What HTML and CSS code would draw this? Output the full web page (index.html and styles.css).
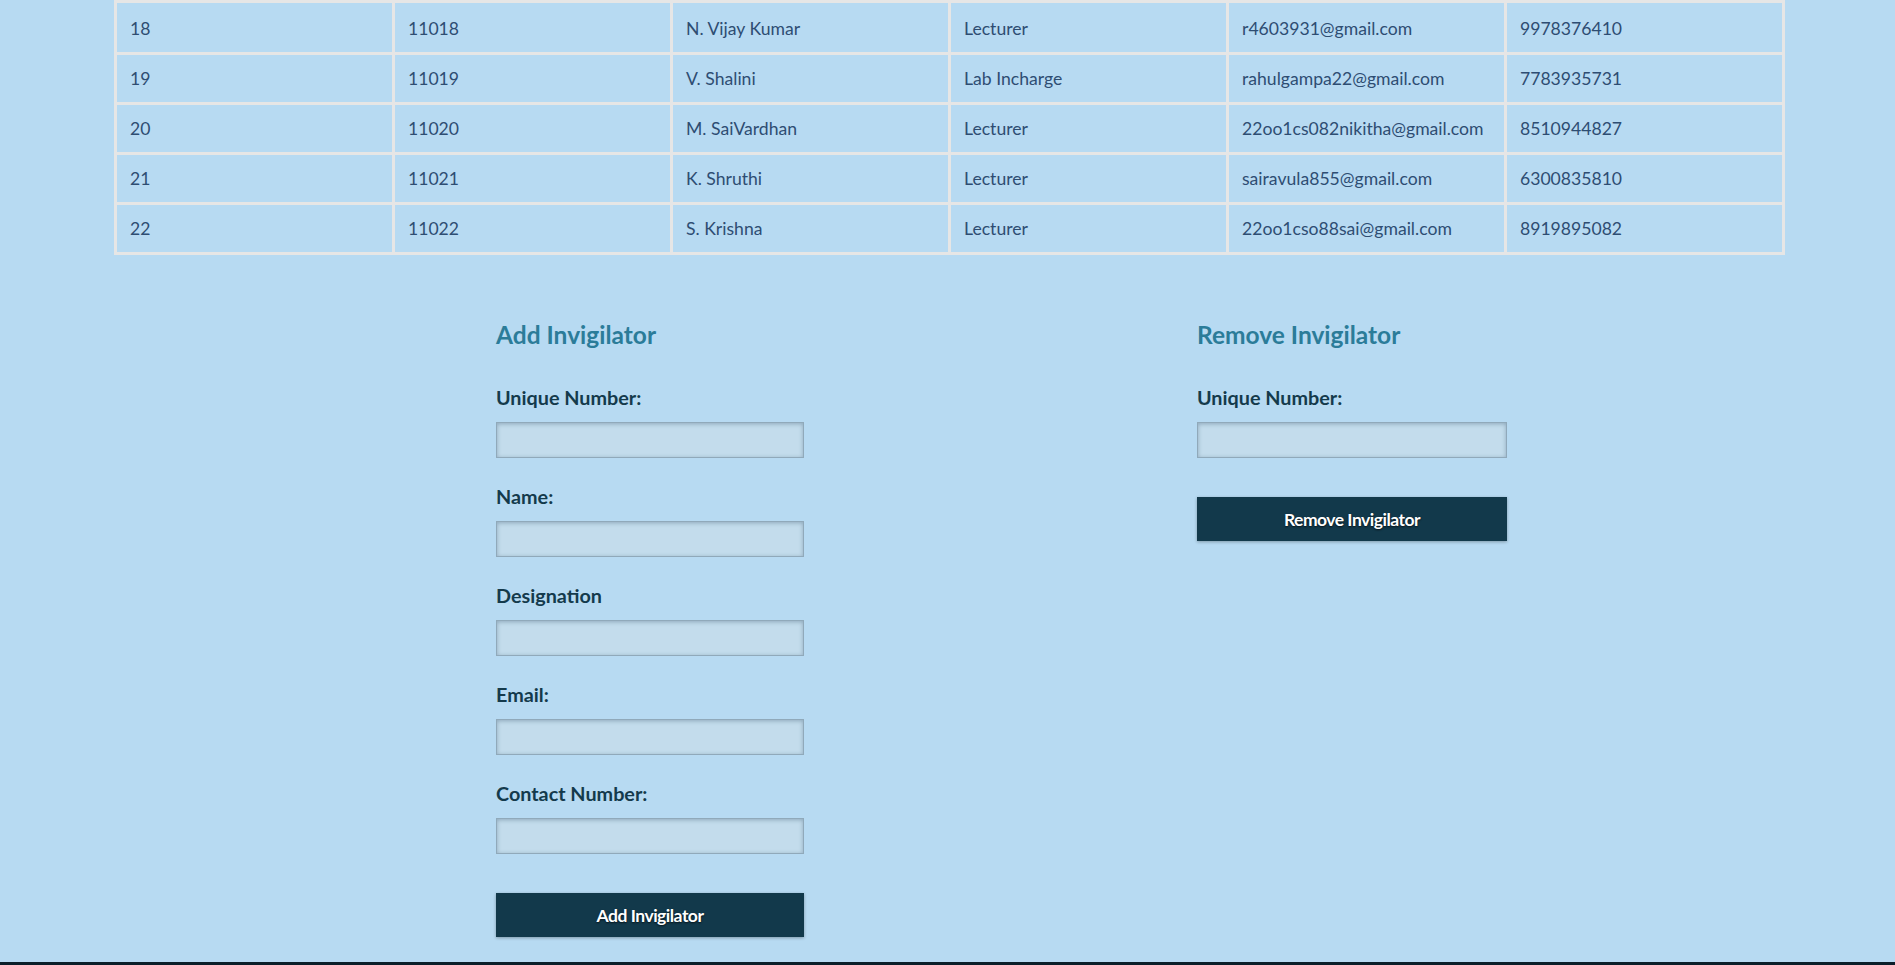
FILE: index.html
```html
<!DOCTYPE html>
<html>
<head>
<meta charset="utf-8">
<link rel="stylesheet" href="styles.css">
</head>
<body>
<main class="page">
  <table class="staff-table">
    <tbody>
      <tr><td>18</td><td>11018</td><td>N. Vijay Kumar</td><td>Lecturer</td><td>r4603931@gmail.com</td><td>9978376410</td></tr>
      <tr><td>19</td><td>11019</td><td>V. Shalini</td><td>Lab Incharge</td><td>rahulgampa22@gmail.com</td><td>7783935731</td></tr>
      <tr><td>20</td><td>11020</td><td>M. SaiVardhan</td><td>Lecturer</td><td>22oo1cs082nikitha@gmail.com</td><td>8510944827</td></tr>
      <tr><td>21</td><td>11021</td><td>K. Shruthi</td><td>Lecturer</td><td>sairavula855@gmail.com</td><td>6300835810</td></tr>
      <tr><td>22</td><td>11022</td><td>S. Krishna</td><td>Lecturer</td><td>22oo1cso88sai@gmail.com</td><td>8919895082</td></tr>
    </tbody>
  </table>

  <section class="forms">
    <form class="form-box form-add">
      <h2 class="form-title">Add Invigilator</h2>
      <label class="field-label">Unique Number:</label>
      <input class="field-input" type="text">
      <label class="field-label">Name:</label>
      <input class="field-input" type="text">
      <label class="field-label">Designation</label>
      <input class="field-input" type="text">
      <label class="field-label">Email:</label>
      <input class="field-input" type="text">
      <label class="field-label">Contact Number:</label>
      <input class="field-input" type="text">
      <button class="form-btn" type="button">Add Invigilator</button>
    </form>
    <form class="form-box form-remove">
      <h2 class="form-title">Remove Invigilator</h2>
      <label class="field-label">Unique Number:</label>
      <input class="field-input" type="text">
      <button class="form-btn" type="button">Remove Invigilator</button>
    </form>
  </section>
</main>
<footer class="footer"></footer>
</body>
</html>
```
FILE: styles.css
```css
* { box-sizing: border-box; }
html, body {
  margin: 0;
  padding: 0;
  background: #b7daf2;
  font-family: "Lato", "Noto Sans", "Liberation Sans", sans-serif;
}
.page {
  padding-bottom: 25px;
}
.staff-table {
  width: 1671px;
  margin-left: 114px;
  border-collapse: collapse;
  table-layout: fixed;
}
.staff-table td {
  border: 3px solid #e6e6e6;
  padding: 14px 13px;
  line-height: 19px;
  font-size: 17.6px;
  color: #2e4d72;
  white-space: nowrap;
}
.staff-table tr:first-child td {
  padding-top: 16px;
}
.forms {
  display: flex;
  padding-left: 496px;
  margin-top: 64px;
}
.form-box {
  display: flex;
  flex-direction: column;
  align-items: flex-start;
}
.form-add { width: 701px; }
.form-remove { width: 400px; }
.form-title {
  margin: 0 0 35px 0;
  font-size: 24.5px;
  line-height: 31px;
  font-weight: 700;
  color: #2b7c99;
}
.field-label {
  font-size: 19.8px;
  line-height: 24px;
  font-weight: 700;
  color: #143a4c;
  margin-bottom: 13px;
}
.field-input {
  width: 308px;
  height: 36px;
  background: #c3dcec;
  border: 1px solid #90a9ba;
  box-shadow: inset 0 1px 4px rgba(40, 70, 95, 0.35);
  margin: 0 0 26px 0;
  padding: 4px 8px;
}
.form-remove .field-input,
.form-remove .form-btn { width: 310px; }
.field-input + .form-btn { margin-top: 13px; }
.form-btn {
  width: 308px;
  height: 44px;
  background: #12394b;
  color: #ffffff;
  border: none;
  font-family: "Lato", "Noto Sans", "Liberation Sans", sans-serif;
  font-size: 17.5px;
  font-weight: 700;
  letter-spacing: -0.5px;
  text-shadow: 0 1px 2px rgba(0, 0, 0, 0.7);
  box-shadow: 0 1px 3px rgba(0, 0, 0, 0.3);
  cursor: pointer;
}
.footer {
  height: 40px;
  background: #0b1e2a;
}
```
